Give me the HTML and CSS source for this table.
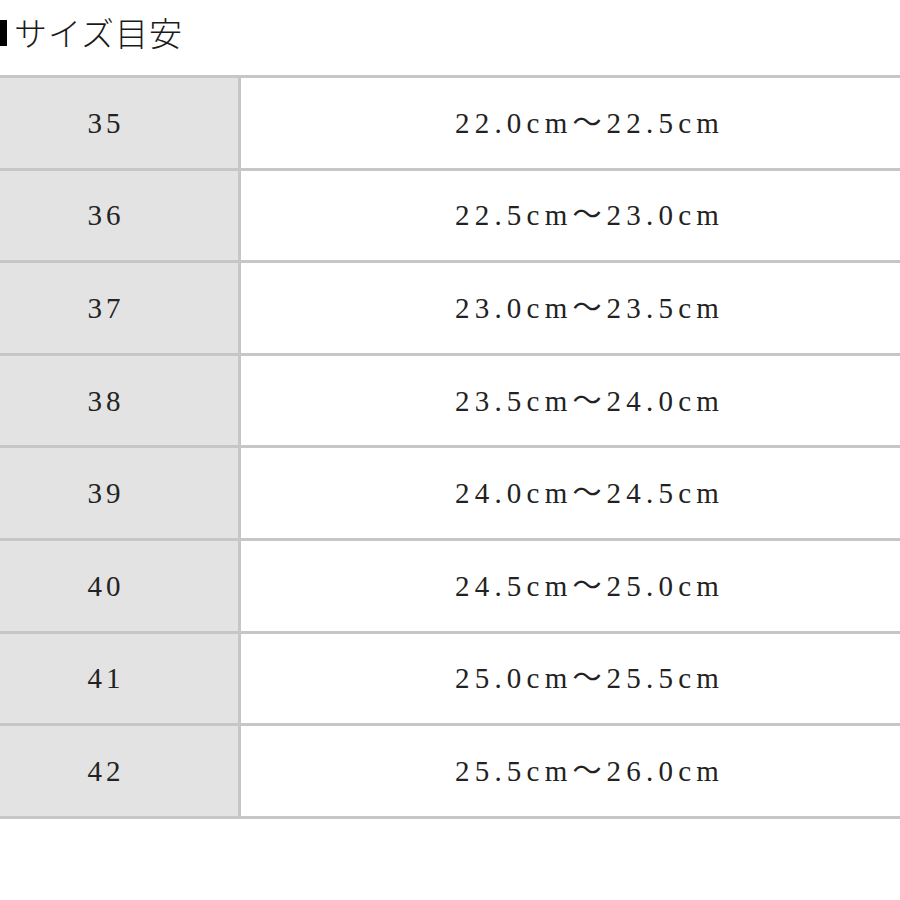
FILE: index.html
```html
<!DOCTYPE html>
<html lang="ja">
<head>
<meta charset="utf-8">
<link rel="stylesheet" href="styles.css">
</head>
<body>
<div class="page">
  <h2 class="title"><span class="mark"></span>サイズ目安</h2>
  <table class="size-table">
    <tbody>
      <tr><td class="eu">35</td><td class="cm">22.0cm〜22.5cm</td></tr>
      <tr><td class="eu">36</td><td class="cm">22.5cm〜23.0cm</td></tr>
      <tr><td class="eu">37</td><td class="cm">23.0cm〜23.5cm</td></tr>
      <tr><td class="eu">38</td><td class="cm">23.5cm〜24.0cm</td></tr>
      <tr><td class="eu">39</td><td class="cm">24.0cm〜24.5cm</td></tr>
      <tr><td class="eu">40</td><td class="cm">24.5cm〜25.0cm</td></tr>
      <tr><td class="eu">41</td><td class="cm">25.0cm〜25.5cm</td></tr>
      <tr><td class="eu">42</td><td class="cm">25.5cm〜26.0cm</td></tr>
    </tbody>
  </table>
</div>
</body>
</html>
```
FILE: styles.css
```css
html, body {
  margin: 0;
  padding: 0;
  background: #ffffff;
}
body {
  overflow: hidden;
  width: 900px;
  height: 900px;
  color: #222222;
  font-family: "Liberation Serif", "Noto Sans CJK JP", serif;
}
.page {
  width: 900px;
}
.title {
  margin: 0;
  height: 75px;
  padding-top: 10px;
  box-sizing: border-box;
  font-family: "Noto Sans CJK JP", sans-serif;
  font-weight: 300;
  font-size: 33px;
  letter-spacing: 1px;
  line-height: 44px;
  color: #1a1a1a;
  white-space: nowrap;
  display: flex;
  align-items: flex-start;
}
.mark {
  display: inline-block;
  width: 26px;
  height: 26px;
  background: #000;
  margin-left: -19px;
  margin-right: 7px;
  margin-top: 10px;
  flex: none;
}
.size-table {
  margin-left: -26px;
  width: 964px;
  border-collapse: collapse;
  border-top: 3px solid #c6c6c6;
}
.size-table td {
  border-bottom: 3px solid #c6c6c6;
  height: 89.6px;
  padding: 0;
  text-align: center;
  vertical-align: middle;
  font-size: 29px;
  line-height: 32px;
  letter-spacing: 5.2px;
}
.size-table td.eu {
  width: 264px;
  background: #e3e3e3;
  border-right: 3px solid #c6c6c6;
  letter-spacing: 4px;
}
.size-table td.cm {
  background: #ffffff;
}
```
